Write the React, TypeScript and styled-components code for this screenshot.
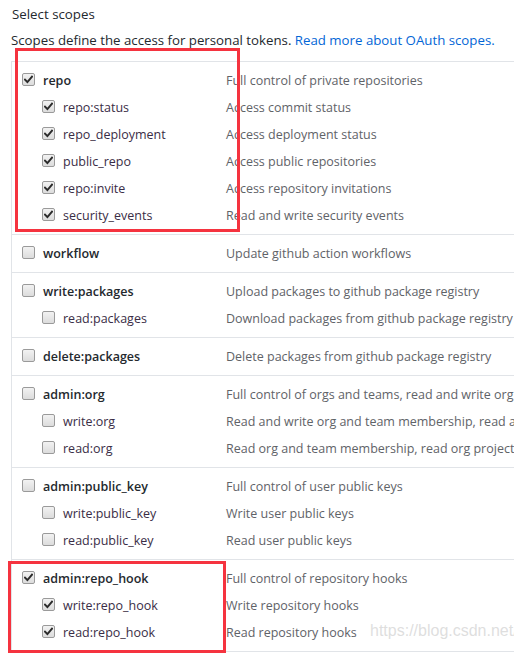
import React from "react";
import styled, { createGlobalStyle } from "styled-components";

const Global = createGlobalStyle`
  html, body {
    margin: 0;
    padding: 0;
    background: #ffffff;
    overflow: hidden;
  }
  body {
    font-family: "Open Sans", "Noto Sans", "Liberation Sans", sans-serif;
    font-size: 13px;
    color: #24292e;
  }
`;

const Page = styled.div`
  position: relative;
  width: 514px;
  height: 658px;
  overflow: hidden;
  padding: 4px 0 0 11px;
  box-sizing: border-box;
`;

const Title = styled.div`
  font-size: 13.3px;
  line-height: 20px;
  color: #24292e;
  padding-left: 1px;
`;

const Intro = styled.p`
  margin: 6px 0 0;
  font-size: 13.25px;
  line-height: 20px;
  color: #24292e;
  white-space: nowrap;
`;

const Link = styled.a`
  color: #0366d6;
  text-decoration: none;
`;

const ScopeList = styled.div`
  margin-top: 11px;
  width: 640px;
  border-left: 1px solid #e1e4e8;
  border-top: 1px solid #e1e4e8;
`;

const Group = styled.div`
  border-bottom: 1px solid #e1e4e8;
  padding: 5px 0;
`;

const Row = styled.div`
  display: grid;
  grid-template-columns: 214px 1fr;
  height: 27px;
  align-items: center;
`;

const LabelCell = styled.label<{ $child?: boolean }>`
  display: flex;
  align-items: center;
  gap: 8px;
  padding-left: ${(p) => (p.$child ? 30 : 10)}px;
  font-size: 12.5px;
  font-weight: ${(p) => (p.$child ? 400 : 600)};
  color: ${(p) => (p.$child ? "#3a2d46" : "#24292e")};
  white-space: nowrap;
`;

const Box = styled.span`
  display: inline-flex;
  align-items: center;
  justify-content: center;
  width: 13px;
  height: 13px;
  box-sizing: border-box;
  border: 1px solid #9a9a9a;
  border-radius: 2px;
  background: linear-gradient(#f2f2f2, #dcdcdc);
  margin-top: -3px;
  flex: none;
`;

const Desc = styled.span`
  font-size: 12.5px;
  color: #5f6368;
  white-space: nowrap;
`;

const Highlight = styled.div<{ $x: number; $y: number; $w: number; $h: number }>`
  position: absolute;
  left: ${(p) => p.$x}px;
  top: ${(p) => p.$y}px;
  width: ${(p) => p.$w}px;
  height: ${(p) => p.$h}px;
  border: 3px solid #f5333f;
  box-sizing: border-box;
  pointer-events: none;
`;

const Watermark = styled.div`
  position: absolute;
  left: 370px;
  top: 622px;
  font-family: "Liberation Sans", Arial, sans-serif;
  font-size: 16px;
  color: rgba(200, 200, 200, 0.6);
  white-space: nowrap;
  pointer-events: none;
`;

const Check = ({ on }: { on: boolean }) => (
  <Box>
    {on && (
      <svg width="9" height="9" viewBox="0 0 9 9">
        <path d="M1 4.6 L3.4 7 L8 1.6" fill="none" stroke="#2b2b2b" strokeWidth="1.9" strokeLinecap="square" />
      </svg>
    )}
  </Box>
);

type Scope = { name: string; desc: string; on: boolean; child?: boolean };

const groups: Scope[][] = [
  [
    { name: "repo", desc: "Full control of private repositories", on: true },
    { name: "repo:status", desc: "Access commit status", on: true, child: true },
    { name: "repo_deployment", desc: "Access deployment status", on: true, child: true },
    { name: "public_repo", desc: "Access public repositories", on: true, child: true },
    { name: "repo:invite", desc: "Access repository invitations", on: true, child: true },
    { name: "security_events", desc: "Read and write security events", on: true, child: true },
  ],
  [{ name: "workflow", desc: "Update github action workflows", on: false }],
  [
    { name: "write:packages", desc: "Upload packages to github package registry", on: false },
    { name: "read:packages", desc: "Download packages from github package registry", on: false, child: true },
  ],
  [{ name: "delete:packages", desc: "Delete packages from github package registry", on: false }],
  [
    { name: "admin:org", desc: "Full control of orgs and teams, read and write org projects", on: false },
    { name: "write:org", desc: "Read and write org and team membership, read and write org projects", on: false, child: true },
    { name: "read:org", desc: "Read org and team membership, read org projects", on: false, child: true },
  ],
  [
    { name: "admin:public_key", desc: "Full control of user public keys", on: false },
    { name: "write:public_key", desc: "Write user public keys", on: false, child: true },
    { name: "read:public_key", desc: "Read user public keys", on: false, child: true },
  ],
  [
    { name: "admin:repo_hook", desc: "Full control of repository hooks", on: true },
    { name: "write:repo_hook", desc: "Write repository hooks", on: true, child: true },
    { name: "read:repo_hook", desc: "Read repository hooks", on: true, child: true },
  ],
];

export default function App() {
  return (
    <>
      <Global />
      <Page>
        <Title>Select scopes</Title>
        <Intro>
          Scopes define the access for personal tokens. <Link href="#">Read more about OAuth scopes.</Link>
        </Intro>
        <ScopeList>
          {groups.map((g, i) => (
            <Group key={i}>
              {g.map((s) => (
                <Row key={s.name}>
                  <LabelCell $child={s.child}>
                    <Check on={s.on} />
                    {s.name}
                  </LabelCell>
                  <Desc>{s.desc}</Desc>
                </Row>
              ))}
            </Group>
          ))}
        </ScopeList>
        <Highlight $x={15} $y={48} $w={225} $h={184} />
        <Highlight $x={8} $y={561} $w={218} $h={92} />
        <Watermark>https://blog.csdn.net/</Watermark>
      </Page>
    </>
  );
}
